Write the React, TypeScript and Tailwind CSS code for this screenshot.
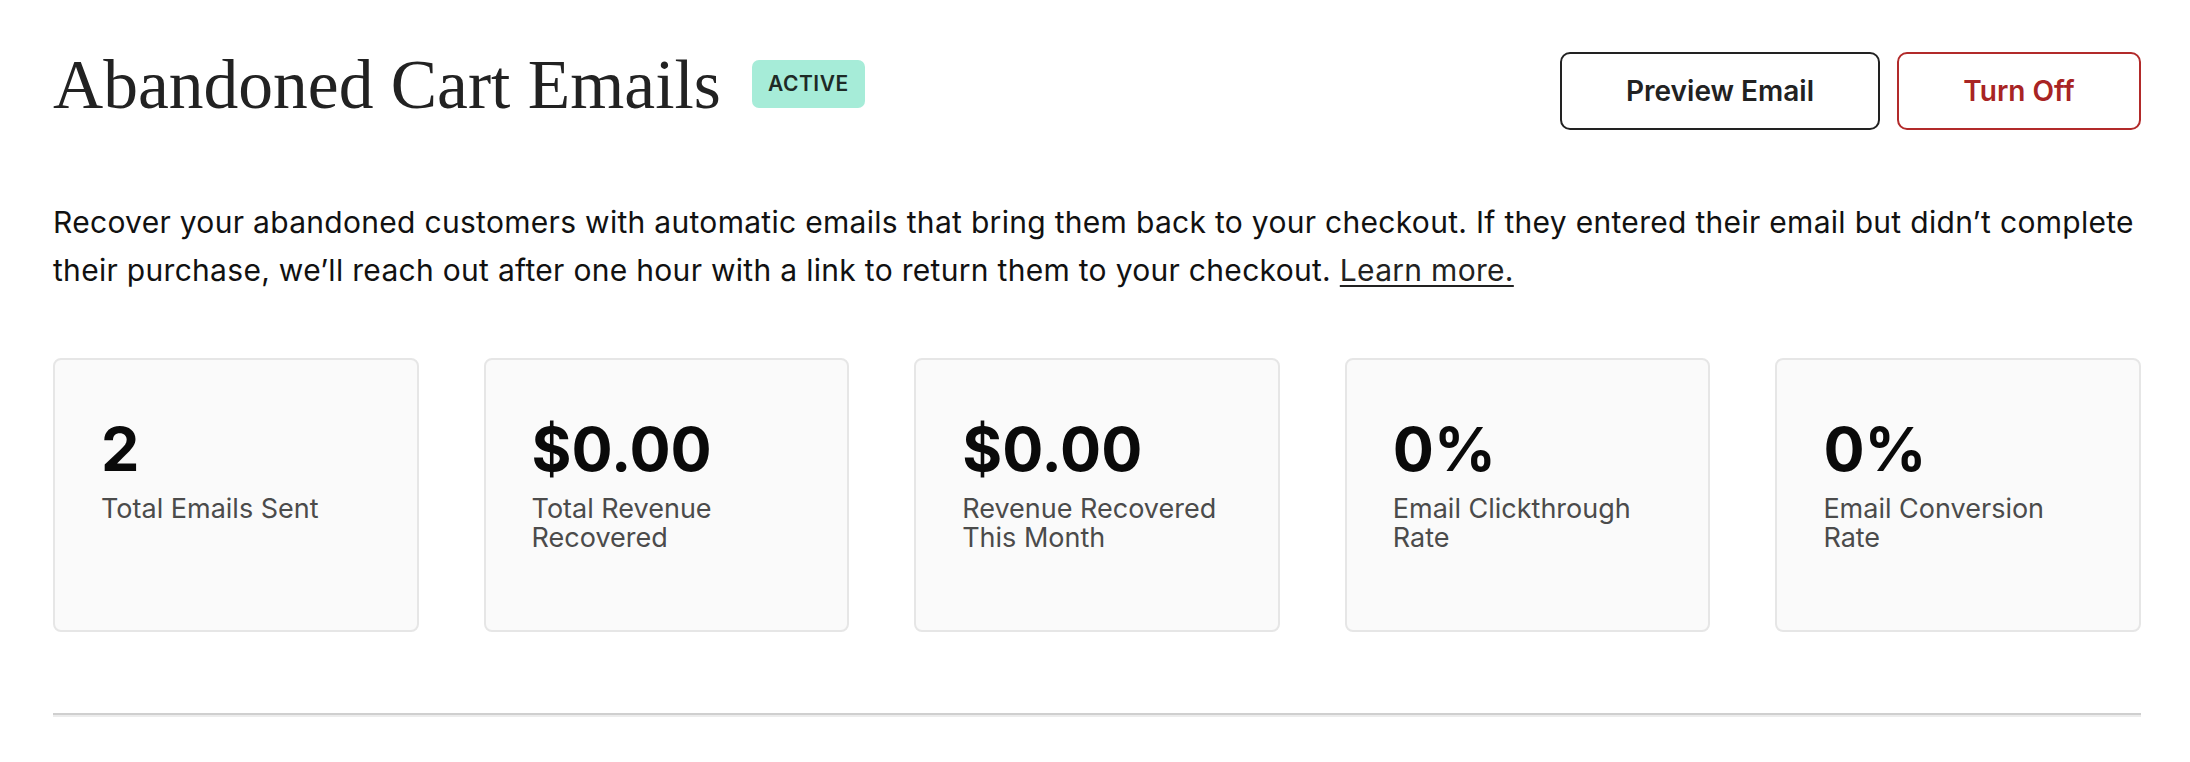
const stats = [
  { value: '2', label: 'Total Emails Sent' },
  { value: '$0.00', label: 'Total Revenue Recovered' },
  { value: '$0.00', label: 'Revenue Recovered This Month' },
  { value: '0%', label: 'Email Clickthrough Rate' },
  { value: '0%', label: 'Email Conversion Rate' },
];

const App = () => {
  return (
    <div className="min-h-screen bg-white pl-[53px] pr-[49px] pt-[52px] font-['Inter',sans-serif]">
      {/* Header */}
      <div className="flex items-start justify-between">
        <div className="flex items-start">
          <h1 className="font-['Liberation_Serif',serif] text-[69.5px] leading-[68px] font-normal text-[#222] mt-[-1px]">
            Abandoned Cart Emails
          </h1>
          <span className="ml-[31px] mt-[8px] flex h-[48px] w-[113px] items-center justify-center rounded-[7px] bg-[#a6ecd8] text-[21px] font-semibold tracking-[0.5px] text-[#1e2a26]">
            ACTIVE
          </span>
        </div>
        <div className="flex gap-[17px]">
          <button className="h-[78px] w-[320px] rounded-[10px] border-2 border-[#222] bg-white text-[28px] font-semibold text-[#222]">
            Preview Email
          </button>
          <button className="h-[78px] w-[244px] rounded-[10px] border-2 border-[#b22a2a] bg-white text-[28px] font-semibold text-[#a82424]">
            Turn Off
          </button>
        </div>
      </div>

      {/* Description */}
      <p className="mt-[68px] text-[30px] leading-[48px] tracking-[0.3px] text-[#111]">
        Recover your abandoned customers with automatic emails that bring them back to your checkout. If they entered their email but didn’t complete their purchase, we’ll reach out after one hour with a link to return them to your checkout.{' '}
        <a href="#" className="text-[#222] underline underline-offset-[4px] decoration-2">Learn more.</a>
      </p>

      {/* Stats */}
      <div className="mt-[64px] grid grid-cols-5 gap-[65px]">
        {stats.map((s, i) => (
          <div
            key={i}
            className="h-[274px] rounded-[8px] border-2 border-[#e6e6e6] bg-[#fafafa] pl-[46px] pr-[36px] pt-[58px]"
          >
            <div className="text-[61px] leading-[62px] font-bold text-[#0a0a0a]">{s.value}</div>
            <div className="mt-[14px] text-[27px] leading-[29px] text-[#4b4b4b]">{s.label}</div>
          </div>
        ))}
      </div>

      {/* Divider */}
      <div className="mt-[81px] h-[4px] border-t-2 border-b-2 border-t-[#cfcfcf] border-b-[#ececec]"></div>
    </div>
  );
};

export default App;
